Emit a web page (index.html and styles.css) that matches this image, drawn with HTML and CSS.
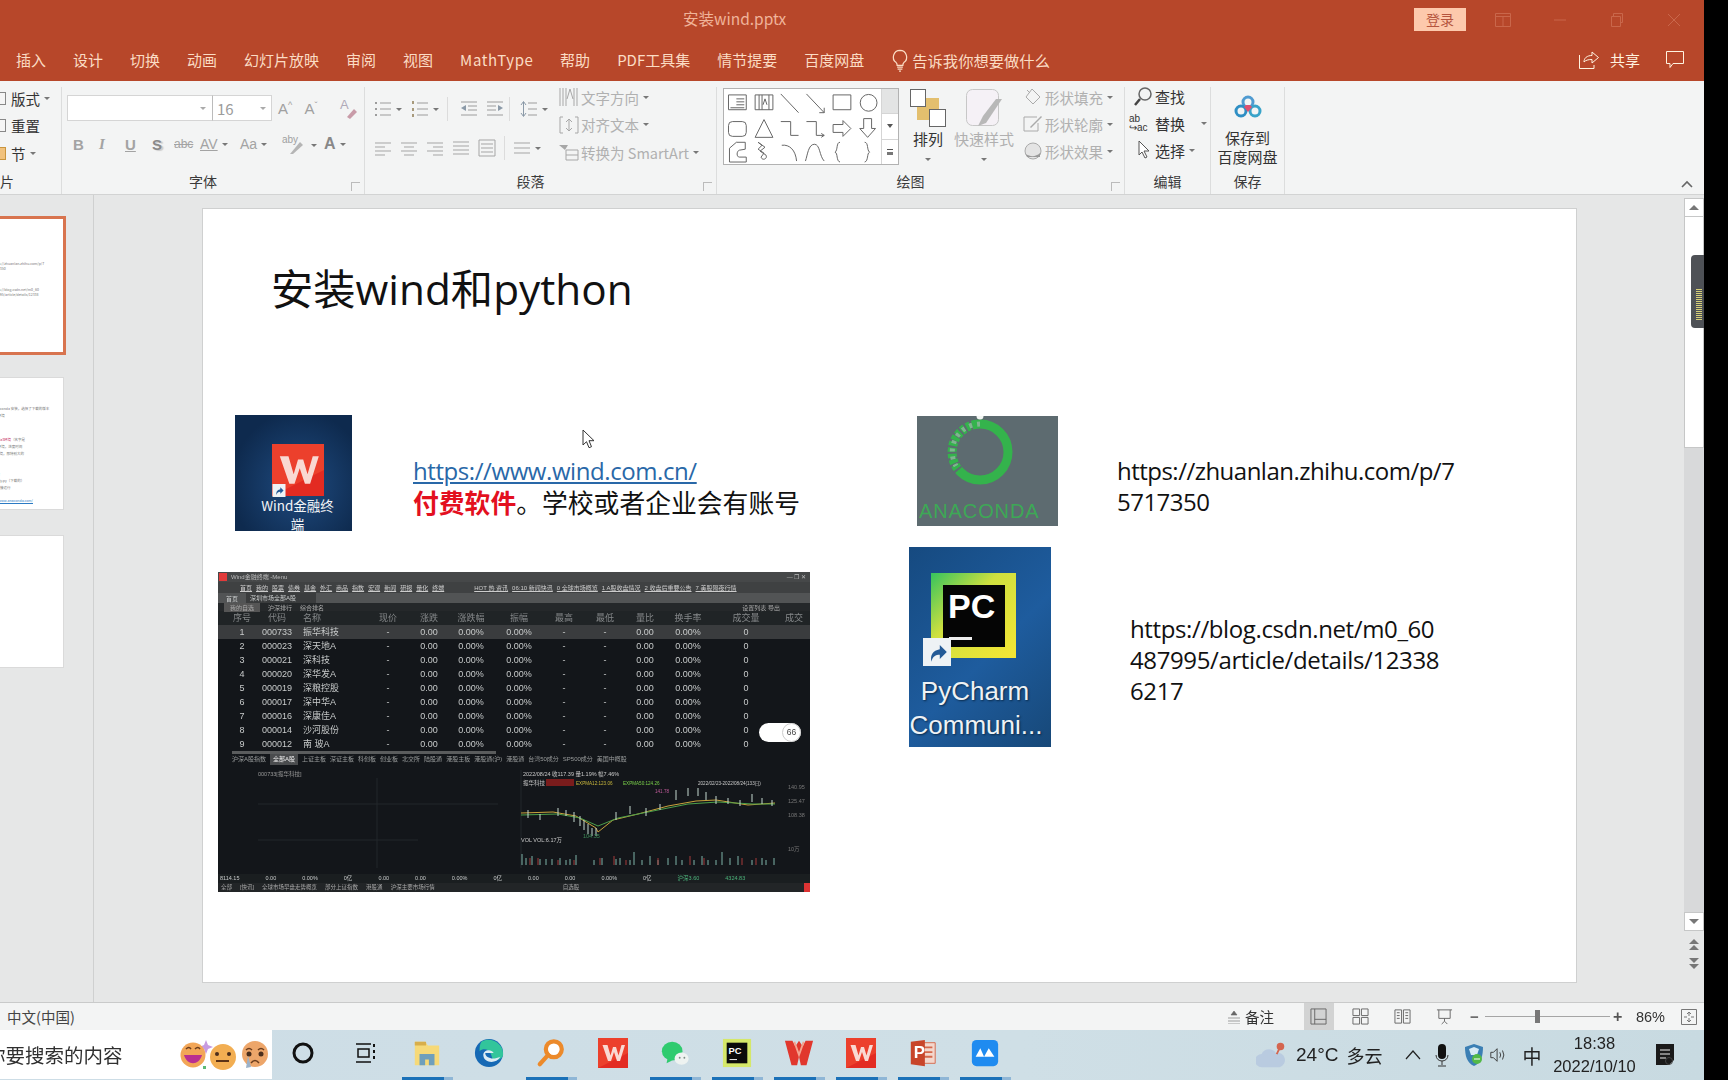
FILE: index.html
```html
<!DOCTYPE html>
<html lang="zh-CN">
<head>
<meta charset="utf-8">
<title>安装wind.pptx</title>
<link rel="stylesheet" href="styles.css">
</head>
<body>
<svg class="defs" width="0" height="0">
  <symbol id="ico-wind" viewBox="0 0 60 60"><rect width="60" height="60" fill="#e32b22"/><path d="M0 0h60v30L0 60z" fill="#f04a30" opacity=".7"/><path d="M9 14h10l6 21 5-17h6l5 17 6-21h7L44 46h-6l-6-18-6 18h-6z" fill="#f9d9d2"/></symbol>
  <symbol id="ico-shortcut" viewBox="0 0 20 20"><rect width="20" height="20" fill="#eef2f5"/><path d="M6 17c-1-5 1-8 6-9V5l5 5-5 5v-3c-3 0-5 1-6 5z" fill="#245a96"/></symbol>
</svg>
<div class="screen">
  <header class="titlebar">
    <div class="title-row">
      <div class="doc-title">安装wind.pptx</div>
      <div class="login">登录</div>
      <div class="win-btns">
        <svg class="win-ico" viewBox="0 0 16 14"><path d="M.5.5h15v13H.5zM.5 3.5h15M8 3.5v10" fill="none" stroke="currentColor"/></svg>
        <svg class="win-ico" viewBox="0 0 16 14"><path d="M2 7h12" fill="none" stroke="currentColor"/></svg>
        <svg class="win-ico" viewBox="0 0 16 14"><path d="M2.500 3.500h9v10h-9zM4.500 3V.5h9v9H12" fill="none" stroke="currentColor"/></svg>
        <svg class="win-ico" viewBox="0 0 16 14"><path d="M2 1l12 12M14 1L2 13" fill="none" stroke="currentColor"/></svg>
      </div>
    </div>
    <div class="tab-row">
      <nav class="tabs">
        <span>插入</span><span>设计</span><span>切换</span><span>动画</span><span>幻灯片放映</span><span>审阅</span><span>视图</span><span class="tab-math">MathType</span><span>帮助</span><span>PDF工具集</span><span>情节提要</span><span>百度网盘</span>
        <span class="tell">
          <svg class="bulb" viewBox="0 0 18 24"><path d="M9 1.500a7 7 0 0 0-4 12.700c.8.700 1 1.500 1 2.800h6c0-1.300.2-2.100 1-2.800A7 7 0 0 0 9 1.500zM6 19h6M6.500 21h5M8 23h2" fill="none" stroke="currentColor" stroke-width="1.300"/></svg>
          告诉我你想要做什么
        </span>
      </nav>
      <div class="share">
        <svg class="share-ico" viewBox="0 0 20 20"><path d="M.5 6v13.500H15V16M5 13c0-4 3-6.500 8-6.500V3l6.500 5.500L13 14v-3.500c-4 0-6.500.8-8 2.500z" fill="none" stroke="currentColor"/></svg>
        <span class="share-label">共享</span>
        <svg class="comment-ico" viewBox="0 0 18 18"><path d="M.5.5h17v12H7l-3 4v-4H.5z" fill="none" stroke="currentColor"/></svg>
      </div>
    </div>
  </header>

  <section class="ribbon">
    <div class="group g-slides">
      <div class="group-body rows">
        <div class="r-item"><i class="mini"></i>版式<b class="caret"></b></div>
        <div class="r-item"><i class="mini"></i>重置</div>
        <div class="r-item"><i class="mini orange"></i>节<b class="caret"></b></div>
      </div>
      <div class="group-label left">片</div>
    </div>

    <div class="group g-font">
      <div class="group-body font-body">
        <div class="font-row1">
          <div class="font-name"><b class="caret"></b></div>
          <div class="font-size">16<b class="caret"></b></div>
          <span class="fi big">A<sup>^</sup></span>
          <span class="fi big">A<sup>ˇ</sup></span>
          <svg class="fi-clear" viewBox="0 0 20 22"><text x="2" y="12" class="svg-a">A</text><path d="M9 20l7-8 3 3-7 7z" fill="#c89ba8"/></svg>
        </div>
        <div class="font-row2">
          <span class="fs serif-b">B</span>
          <span class="fs serif-i">I</span>
          <span class="fs under">U</span>
          <span class="fs shadow">S</span>
          <span class="fs strike">abc</span>
          <span class="fs av">AV<b class="caret"></b></span>
          <span class="fs aa">Aa<b class="caret"></b></span>
          <svg class="hl" viewBox="0 0 24 22"><text x="1" y="10" class="svg-aby">aby</text><path d="M9 21l10-12 3 3-10 9z" fill="#b5b5b5"/></svg>
          <span class="caret-after"><b class="caret"></b></span>
          <span class="fs acolor">A<b class="caret"></b></span>
        </div>
      </div>
      <div class="group-label shifted">字体<i class="launch"></i></div>
    </div>

    <div class="group g-para">
      <div class="group-body para-body">
        <div class="para-left">
          <div class="para-row1">
            <svg class="pi" viewBox="0 0 18 18"><path d="M6 3h11M6 9h11M6 15h11" stroke="#9c9c9c" fill="none"/><path d="M1 2h2v2H1zM1 8h2v2H1zM1 14h2v2H1z" fill="#9c9c9c"/></svg><b class="caret"></b>
            <svg class="pi p-num" viewBox="0 0 18 18"><path d="M6 3h11M6 9h11M6 15h11" stroke="#9c9c9c" fill="none"/><path d="M1 1h2v3H1zM1 8h2v3H1zM1 14h2v3H1z" fill="#a89a7c"/></svg><b class="caret"></b>
            <i class="vsep"></i>
            <svg class="pi p-out" viewBox="0 0 18 18"><path d="M1 2h16M8 6h9M8 10h9M1 15h16" stroke="#9c9c9c" fill="none"/><path d="M6 5v6L1 8z" fill="#8b9aa8"/></svg>
            <svg class="pi p-gap2" viewBox="0 0 18 18"><path d="M1 2h16M1 6h9M1 10h9M1 15h16" stroke="#9c9c9c" fill="none"/><path d="M12 5v6l5-3z" fill="#8b9aa8"/></svg>
            <i class="vsep"></i>
            <svg class="pi p-ls" viewBox="0 0 18 18"><path d="M8 3h9M8 9h9M8 15h9" stroke="#9c9c9c" fill="none"/><path d="M3.500 2v14M1 5l2.500-3.500L6 5M1 13l2.500 3.500L6 13" stroke="#8b9aa8" fill="none"/></svg><b class="caret"></b>
          </div>
          <div class="para-row2">
            <svg class="pi" viewBox="0 0 18 18"><path d="M1 4h16M1 8h10M1 12h16M1 16h10" stroke="#a5a5a5" fill="none"/></svg>
            <svg class="pi" viewBox="0 0 18 18"><path d="M1 4h16M4 8h10M1 12h16M4 16h10" stroke="#a5a5a5" fill="none"/></svg>
            <svg class="pi" viewBox="0 0 18 18"><path d="M1 4h16M7 8h10M1 12h16M7 16h10" stroke="#a5a5a5" fill="none"/></svg>
            <svg class="pi" viewBox="0 0 18 18"><path d="M1 3h16M1 7h16M1 11h16M1 15h16" stroke="#a5a5a5" fill="none"/></svg>
            <svg class="pi" viewBox="0 0 18 18"><path d="M1 1h16M1 17h16M3 5h12M3 9h12M3 13h12M1 1v16M17 1v16" stroke="#a5a5a5" fill="none"/></svg>
            <i class="vsep"></i>
            <svg class="pi" viewBox="0 0 18 18"><path d="M1 4h16M1 9h16M1 14h16" stroke="#a5a5a5" fill="none"/></svg><b class="caret"></b>
          </div>
        </div>
        <div class="para-right">
          <div class="r-item dim"><svg class="ri" viewBox="0 0 22 20"><path d="M2 1v18M5 1v18M8 1v18M16 1v18M19 1v18M12 2l-3 10M12 2l3 10" stroke="#a7a7a7" fill="none"/></svg>文字方向<b class="caret"></b></div>
          <div class="r-item dim"><svg class="ri" viewBox="0 0 22 20"><path d="M5 2H2v16h3M17 2h3v16h-3M11 4v12M8 7l3-3 3 3M8 13l3 3 3-3" stroke="#a7a7a7" fill="none"/></svg>对齐文本<b class="caret"></b></div>
          <div class="r-item dim"><svg class="ri" viewBox="0 0 22 20"><path d="M1 3h9l-3 5z" fill="#a7a7a7"/><path d="M8 8h12v10H8zM8 13h12" stroke="#a7a7a7" fill="none"/></svg>转换为 SmartArt<b class="caret"></b></div>
        </div>
      </div>
      <div class="group-label shifted">段落<i class="launch"></i></div>
    </div>

    <div class="group g-draw">
      <div class="group-body draw-body">
        <div class="gallery">
          <svg class="shapes" viewBox="0 0 158 76">
            <g fill="none" stroke="#666" stroke-width="1">
              <path d="M4 6h18v15H4zM12 10h8M12 13h8M12 16h8M6 19h14"/><path d="M31 6h18v15H31zM35 6v15M38 6v15M45 6v15M41 10l-2 6M41 10l2 6"/>
              <path d="M57 5l18 19"/><path d="M83 5l18 19M101 24v-5M101 24h-5"/><path d="M110 6h18v15h-18z"/><circle cx="146" cy="14" r="8.500"/>
              <rect x="4" y="33" width="18" height="15" rx="4"/><path d="M40 31l9 18H31z"/><path d="M57 33h10v14h8"/><path d="M83 33h10v14h8M101 47l-3-2M101 47l-3 2"/>
              <path d="M110 36h10v-4l8 8-8 8v-4h-10z"/><path d="M141 30h8v10h4l-8 9-8-9h4z"/>
              <path d="M5 74V60l7-6h9v7l-6 1c-3 1-3 7 0 7h7v5z"/><path d="M34 54l7 5-5 4 6 4c2 4-4 6-5 2l3-4-6-4 4-4z"/><path d="M58 57c8-1 14 5 15 16"/><path d="M82 73c2-6 3-17 9-17s5 12 10 17"/><path d="M117 54c-4 0-2 8-5 10 3 1 1 9 5 10"/><path d="M142 54c4 0 2 8 5 10-3 1-1 9-5 10"/>
            </g>
          </svg>
          <div class="gal-scroll">
            <span class="gs gs-up"></span>
            <span class="gs"><i class="tri"></i></span>
            <span class="gs gs-more"><i class="tri-line"></i></span>
          </div>
        </div>
        <div class="big-btn arrange-btn">
          <svg class="arrange" viewBox="0 0 36 38"><rect x="7" y="9" width="22" height="22" fill="#e3bf6e"/><rect x=".5" y=".5" width="15" height="17" fill="#fff" stroke="#666"/><rect x="19.500" y="20.500" width="16" height="17" fill="#fff" stroke="#666"/></svg>
          <span class="big-label">排列</span><b class="caret"></b>
        </div>
        <div class="big-btn quick">
          <svg class="qstyle" viewBox="0 0 36 38"><rect x=".5" y=".5" width="32" height="36" rx="6" fill="#f5f1f6" stroke="#c7c7c7"/><path d="M36 10L20 34l-8 3 5-10 13-17z" fill="#b8b8b8"/></svg>
          <span class="big-label">快速样式</span><b class="caret"></b>
        </div>
        <div class="shape-col">
          <div class="r-item dim"><svg class="ri2" viewBox="0 0 20 20"><path d="M9 2l8 8-7 7-7-7z" fill="none" stroke="#aaa"/><path d="M4 3l3 3" stroke="#aaa"/></svg>形状填充<b class="caret"></b></div>
          <div class="r-item dim"><svg class="ri2" viewBox="0 0 20 20"><path d="M14 3H1v14h14V9" fill="none" stroke="#aaa"/><path d="M7 13l11-11 1 1L8 14z" fill="#aaa"/></svg>形状轮廓<b class="caret"></b></div>
          <div class="r-item dim"><svg class="ri2" viewBox="0 0 20 20"><circle cx="10" cy="10" r="8" fill="#e4e4e4" stroke="#aaa"/><path d="M3 13c4 3 10 3 14-1v4H4z" fill="#999"/></svg>形状效果<b class="caret"></b></div>
        </div>
      </div>
      <div class="group-label shifted">绘图<i class="launch"></i></div>
    </div>

    <div class="group g-edit">
      <div class="group-body rows edit-rows">
        <div class="r-item strong"><svg class="ri3" viewBox="0 0 20 20"><circle cx="12" cy="8" r="6" fill="none" stroke="#666" stroke-width="1.500"/><path d="M7 13l-5 6" stroke="#444" stroke-width="2.500"/></svg>查找</div>
        <div class="r-item strong"><span class="abac">ab<br>↪ac</span>替换<b class="caret spaced"></b></div>
        <div class="r-item strong"><svg class="ri3 ptr" viewBox="0 0 20 20"><path d="M5 1v14l3-3 3 6 2-1-3-6h5z" fill="#fff" stroke="#555"/></svg>选择<b class="caret"></b></div>
      </div>
      <div class="group-label">编辑</div>
    </div>

    <div class="group g-save">
      <div class="group-body save-body">
        <svg class="baidu" viewBox="0 0 28 24"><circle cx="14" cy="7" r="5" fill="none" stroke="#4f9bd1" stroke-width="3"/><circle cx="7" cy="16" r="5" fill="none" stroke="#2f8fc4" stroke-width="3"/><circle cx="21" cy="16" r="5" fill="none" stroke="#39a3c9" stroke-width="3"/><path d="M14 17l-4-5 2-2h4l2 2z" fill="#e0506f"/></svg>
        <span class="save-text">保存到<br>百度网盘</span>
      </div>
      <div class="group-label">保存</div>
    </div>

    <svg class="collapse" viewBox="0 0 12 8"><path d="M1 7l5-5 5 5" fill="none" stroke="#666" stroke-width="1.600"/></svg>
  </section>

  <main class="editor">
    <aside class="thumbs">
      <div class="thumb active">
        <p class="tt t1a">https://zhuanlan.zhihu.com/p/7<br>5717350</p>
        <p class="tt t1b">https://blog.csdn.net/m0_60<br>487995/article/details/12338</p>
      </div>
      <div class="thumb second">
        <p class="tt t2a">通过 anaconda 安装，选择了下载的版本<br>python环境</p>
        <p class="tt t2b"><em>anaconda3环境</em>（名字是<br>python环境，进度时间<br>conda环境，即特别大的<br>可选</p>
        <p class="tt t2c">环境变量<br>anacondy.py（下载的）<br>命令行直接运行</p>
        <p class="tt t2d">https://www.anaconda.com/</p>
      </div>
      <div class="thumb third"></div>
    </aside>

    <div class="work">
      <article class="slide">
        <h1 class="slide-title">安装wind和python</h1>

        <div class="pic pic-wind">
          <svg class="w-logo"><use href="#ico-wind"/></svg>
          <svg class="w-short"><use href="#ico-shortcut"/></svg>
          <div class="w-label">Wind金融终<br>端</div>
        </div>

        <div class="stext link-block">
          <a class="link">https://www.wind.com.cn/</a><br>
          <strong class="paid">付费软件</strong>。学校或者企业会有账号
        </div>

        <div class="pic pic-ana">
          <svg class="ana-ring" viewBox="0 0 76 76">
            <circle cx="38" cy="38" r="28" fill="none" stroke="#34b34c" stroke-width="9"/>
            <path d="M30 11A28 28 0 0 0 18 58" fill="none" stroke="#5d6b70" stroke-width="10" stroke-dasharray="2 4"/>
            <path d="M38 10A28 28 0 0 0 14 52" fill="none" stroke="#7fb58f" stroke-width="5" stroke-dasharray="3 5"/>
            <circle cx="38" cy="2" r="3.500" fill="#f3f6f4"/>
          </svg>
          <div class="ana-label">ANACONDA</div>
        </div>
        <div class="stext url-a">https://zhuanlan.zhihu.com/p/7<br>5717350</div>

        <div class="pic pic-py">
          <div class="py-logo"><div class="py-inner"><span class="py-pc">PC</span><i class="py-bar"></i></div></div>
          <svg class="py-short"><use href="#ico-shortcut"/></svg>
          <div class="py-label">PyCharm<br><span class="py-cut">Communi...</span></div>
        </div>
        <div class="stext url-b">https://blog.csdn.net/m0_60<br>487995/article/details/12338<br>6217</div>

        <div class="wind-shot">
          <div class="ws-title"><i class="ws-logo"></i><span>Wind金融终端 -Menu</span><span class="ws-controls">— ❐ ✕</span></div>
          <div class="ws-menu"><span>首页</span><span>我的</span><span>股票</span><span>债券</span><span>基金</span><span>外汇</span><span>商品</span><span>指数</span><span>宏观</span><span>新闻</span><span>研报</span><span>量化</span><span>终端</span><span class="ws-hot">HOT 热 资讯</span><span class="ws-hot2">06:10 新闻快讯</span><span>0 全球市场概览</span><span>1 A股收盘情况</span><span>2 收盘后重要公告</span><span>7 美股隔夜行情</span></div>
          <div class="ws-tabs"><span class="ws-tab1">首页</span><span class="ws-tab2">深圳市场全部A股</span></div>
          <div class="ws-tools"><span class="ws-tool-on">我的自选</span><span>沪深排行</span><span>综合排名</span><span class="ws-right">设置列表 导出</span></div>
          <div class="ws-grid ws-head"><span>序号</span><span>代码</span><span class="l">名称</span><span>现价</span><span>涨跌</span><span>涨跌幅</span><span>振幅</span><span>最高</span><span>最低</span><span>量比</span><span>换手率</span><span>成交量</span><span>成交</span></div>
          <div class="ws-grid on"><span>1</span><span>000733</span><span class="l">振华科技</span><span>-</span><span>0.00</span><span>0.00%</span><span>0.00%</span><span>-</span><span>-</span><span>0.00</span><span>0.00%</span><span>0</span><span></span></div>
          <div class="ws-grid"><span>2</span><span>000023</span><span class="l">深天地A</span><span>-</span><span>0.00</span><span>0.00%</span><span>0.00%</span><span>-</span><span>-</span><span>0.00</span><span>0.00%</span><span>0</span><span></span></div>
          <div class="ws-grid"><span>3</span><span>000021</span><span class="l">深科技</span><span>-</span><span>0.00</span><span>0.00%</span><span>0.00%</span><span>-</span><span>-</span><span>0.00</span><span>0.00%</span><span>0</span><span></span></div>
          <div class="ws-grid"><span>4</span><span>000020</span><span class="l">深华发A</span><span>-</span><span>0.00</span><span>0.00%</span><span>0.00%</span><span>-</span><span>-</span><span>0.00</span><span>0.00%</span><span>0</span><span></span></div>
          <div class="ws-grid"><span>5</span><span>000019</span><span class="l">深粮控股</span><span>-</span><span>0.00</span><span>0.00%</span><span>0.00%</span><span>-</span><span>-</span><span>0.00</span><span>0.00%</span><span>0</span><span></span></div>
          <div class="ws-grid"><span>6</span><span>000017</span><span class="l">深中华A</span><span>-</span><span>0.00</span><span>0.00%</span><span>0.00%</span><span>-</span><span>-</span><span>0.00</span><span>0.00%</span><span>0</span><span></span></div>
          <div class="ws-grid"><span>7</span><span>000016</span><span class="l">深康佳A</span><span>-</span><span>0.00</span><span>0.00%</span><span>0.00%</span><span>-</span><span>-</span><span>0.00</span><span>0.00%</span><span>0</span><span></span></div>
          <div class="ws-grid"><span>8</span><span>000014</span><span class="l">沙河股份</span><span>-</span><span>0.00</span><span>0.00%</span><span>0.00%</span><span>-</span><span>-</span><span>0.00</span><span>0.00%</span><span>0</span><span></span></div>
          <div class="ws-grid"><span>9</span><span>000012</span><span class="l">南 玻A</span><span>-</span><span>0.00</span><span>0.00%</span><span>0.00%</span><span>-</span><span>-</span><span>0.00</span><span>0.00%</span><span>0</span><span></span></div>
          <div class="ws-scroll"><i></i></div>
          <div class="ws-sheet"><span>沪深A股指数</span><span class="on">全部A股</span><span>上证主板</span><span>深证主板</span><span>科创板</span><span>创业板</span><span>北交所</span><span>陆股通</span><span>港股主板</span><span>港股通(沪)</span><span>港股通</span><span>台湾50成分</span><span>SP500成分</span><span>美国中概股</span></div>
          <svg class="ws-chart" viewBox="0 0 592 104">
            <g stroke="#23272a" fill="none"><path d="M40 36H280M40 72H200M159 10V100"/><path d="M303 2V100"/></g>
            <text x="40" y="8" class="ws-t" fill="#9a9a9a">000733[振华科技]</text>
            <text x="305" y="8" class="ws-t" fill="#c9c9c9">2022/08/24 收117.39  量1.19%  幅7.46%</text>
            <text x="305" y="17" class="ws-t" fill="#c9c9c9">振华科技</text>
            <rect x="328" y="11" width="28" height="7" fill="#7a1c1c"/>
            <text x="358" y="17" class="ws-t5" fill="#c9b73c">EXPMA12:123.06</text>
            <text x="405" y="17" class="ws-t5" fill="#7ad04a">EXPMA50:124.26</text>
            <text x="480" y="17" class="ws-t5" fill="#c9c9c9">2022/02/23-2022/08/24(133日)</text>
            <path d="M303 45L335 44 358 48 378 60 380 64 395 52 420 46 450 38 478 33 498 32 530 37 557 35" fill="none" stroke="#c9a23c"/>
            <path d="M303 47L340 46 362 50 380 58 400 50 430 44 470 36 500 34 535 36 557 36" fill="none" stroke="#4c9f4a"/>
            <path d="M310 42v8M322 46v6M340 40v8M348 42v6M356 44v10M362 48v10M366 52v10M370 56v10M374 60v8M378 60v8M398 44v8M412 38v8M428 40v8M442 36v6M458 22v10M470 20v8M480 20v8M488 24v8M498 28v8M510 30v6M522 32v6M534 26v8M544 30v6M554 32v6" stroke="#c5d8cf" fill="none"/>
            <text x="437" y="25" class="ws-t5" fill="#c05a9a">141.78</text>
            <text x="365" y="70" class="ws-t" fill="#3e8e58">104.35</text>
            <text x="303" y="74" class="ws-t" fill="#c9c9c9">VOL  VOL:6.17万</text>
            <text x="570" y="21" class="ws-t" fill="#777">140.95</text>
            <text x="570" y="35" class="ws-t" fill="#777">125.47</text>
            <text x="570" y="49" class="ws-t" fill="#777">108.38</text>
            <text x="570" y="83" class="ws-t" fill="#777">10万</text>
            <path d="M304 97V86M308 97V90M314 97V88M322 97V91M328 97V91M334 97V91M342 97V90M348 97V92M352 97V91M358 97V87M376 97V92M384 97V90M398 97V91M402 97V90M412 97V92M416 97V84M424 97V92M432 97V88M440 97V92M450 97V90M458 97V88M464 97V92M476 97V92M484 97V88M490 97V92M498 97V92M504 97V84M512 97V90M520 97V88M534 97V92M544 97V90M548 97V92M556 97V90" stroke="#7fb3a8" fill="none"/>
            <path d="M312 97V90M320 97V90M340 97V92M356 97V92M382 97V90M396 97V88M408 97V92M440 97V90M472 97V88M486 97V90M524 97V90M538 97V90" stroke="#a63a3a" fill="none"/>
          </svg>
          <div class="ws-info"><span>8114.15</span><span>0.00</span><span>0.00%</span><span>0亿</span><span>0.00</span><span>0.00</span><span>0.00%</span><span>0亿</span><span>0.00</span><span>0.00</span><span>0.00%</span><span>0亿</span><span class="ws-green">沪深3.60</span><span class="ws-green">4324.83</span></div>
          <div class="ws-foot"><span>全部</span><span>[快讯]</span><span>全球市场早盘走势概览</span><span>部分上证指数</span><span>港股通</span><span>沪深主要市场行情</span><span class="ws-last">自选股</span><i></i></div>
          <div class="ws-float"><span class="ws-pct">66</span></div>
        </div>

        <svg class="cursor" viewBox="0 0 14 20"><path d="M1 1v15l3.500-3.300 2.500 6 2.500-1-2.500-6H12z" fill="#fff" stroke="#333"/></svg>
      </article>
    </div>

    <div class="vscroll">
      <div class="sb-btn"><i class="sb-up"></i></div>
      <div class="sb-thumb"></div>
      <div class="sb-track"></div>
      <div class="sb-btn sb-down"><i class="sb-dn"></i></div>
      <div class="sb-page"><i class="sb-up2"></i><i class="sb-up2"></i></div>
      <div class="sb-page sb-page2"><i class="sb-dn2"></i><i class="sb-dn2"></i></div>
      <div class="float-widget"><i></i></div>
    </div>
  </main>

  <footer class="statusbar">
    <span class="lang">中文(中国)</span>
    <div class="st-right">
      <span class="notes"><svg class="st-i" viewBox="0 0 14 14"><path d="M1 8h12M1 11h12M1 14h12M4 5l3-4 3 4z" fill="#666" stroke="#666" stroke-width=".6"/></svg>备注</span>
      <span class="view on"><svg class="st-v" viewBox="0 0 18 18"><path d="M1 1h16v16H1zM5 1v16M5 12h12" fill="none" stroke="#666"/></svg></span>
      <span class="view"><svg class="st-v" viewBox="0 0 18 18"><path d="M1 1h7v7H1zM10 1h7v7h-7zM1 10h7v7H1zM10 10h7v7h-7z" fill="none" stroke="#666"/></svg></span>
      <span class="view"><svg class="st-v" viewBox="0 0 18 18"><path d="M1 2h7v14H1zM10 2h7v14h-7zM3 5h3M3 8h3M3 11h3M12 5h3M12 8h3M12 11h3" fill="none" stroke="#666"/></svg></span>
      <span class="view"><svg class="st-v" viewBox="0 0 18 18"><path d="M1 2h16M3 2v9h12V2M9 11v3M6 17l3-3 3 3" fill="none" stroke="#666"/></svg></span>
      <span class="zoom-minus">−</span>
      <span class="zoom-track"><i class="zoom-thumb"></i></span>
      <span class="zoom-plus">+</span>
      <span class="zoom-val">86%</span>
      <svg class="st-fit" viewBox="0 0 16 16"><path d="M.5.5h15v15H.5zM8 3v4M6 5l2-2 2 2M8 13V9M6 11l2 2 2-2M3 8h3M13 8h-3" fill="none" stroke="#777"/></svg>
    </div>
  </footer>

  <footer class="taskbar">
    <div class="search">
      <span class="search-text">你要搜索的内容</span>
      <svg class="emoji" viewBox="0 0 90 30">
        <path d="M26 0l2 5 5 2-5 2-2 5-2-5-5-2 5-2z" fill="#c79be0"/><rect x="23" y="26" width="3" height="3" fill="#5dbb74"/>
        <circle cx="13" cy="15" r="12.500" fill="#f2a657"/><path d="M4 15c3 11 15 11 18 0z" fill="#b92f91"/><path d="M6 9q3-3 5 0M15 9q3-3 5 0" stroke="#6b3d1d" fill="none" stroke-width="1.500"/>
        <circle cx="75" cy="14" r="13" fill="#eda66a"/><path d="M66 10q3-3 6 0M78 10q3-3 6 0" stroke="#6b3d1d" fill="none" stroke-width="1.500"/><circle cx="69" cy="14" r="2.500" fill="#4b2e1c"/><circle cx="81" cy="14" r="2.500" fill="#4b2e1c"/><path d="M71 23q4-5 8 0" stroke="#6b3d1d" fill="none" stroke-width="1.500"/><path d="M68 16l-2 12 5-1z" fill="#9cb2c9"/>
        <circle cx="43" cy="17" r="13" fill="#f2ae52"/><circle cx="37" cy="14" r="2" fill="#4b2e1c"/><circle cx="49" cy="14" r="2" fill="#4b2e1c"/><path d="M36 21h13" stroke="#5b3216" stroke-width="2"/>
      </svg>
    </div>
    <div class="apps">
      <span class="app"><svg class="ti" viewBox="0 0 24 24"><circle cx="12" cy="12" r="9" fill="none" stroke="#111" stroke-width="3"/></svg></span>
      <span class="app"><svg class="ti" viewBox="0 0 24 24"><path d="M3 3h15M3 21h15M5 8h11v8H5z" fill="none" stroke="#111" stroke-width="1.500"/><path d="M20 3h2v3h-2zM20 9h2v3h-2zM20 15h2v3h-2z" fill="#111"/></svg></span>
      <span class="app run"><svg class="ta" viewBox="0 0 32 32"><path d="M3 4h11l3 4h12v21H3z" fill="#f6d978"/><path d="M3 4h12v4H3z" fill="#d8ae4b"/><path d="M8 29V17h16v12h-6v-6h-4v6z" fill="#6f9fbc"/></svg></span>
      <span class="app"><svg class="ta" viewBox="0 0 32 32"><circle cx="16" cy="16" r="15" fill="#1669b5"/><path d="M8 4c10-6 24 2 23 14-1 5-7 6-11 5l-2-6c-2-6-9-6-12-3 0-4 0-7 2-10z" fill="#32c59b"/><path d="M10 19c-1-6 8-8 11-3H12c0 5 8 8 16 4-4 8-17 7-18-1z" fill="#dcebf4"/></svg></span>
      <span class="app run"><svg class="ta" viewBox="0 0 32 32"><circle cx="19" cy="12" r="8.500" fill="#fff" stroke="#ec8a2b" stroke-width="4.500"/><path d="M13 18L4 28" stroke="#ec8a2b" stroke-width="4.500" stroke-linecap="round"/></svg></span>
      <span class="app"><svg class="ta"><use href="#ico-wind"/></svg></span>
      <span class="app run"><svg class="ta" viewBox="0 0 32 32"><ellipse cx="13" cy="14" rx="11" ry="10" fill="#2fcb6f"/><path d="M8 22l-1 5 6-3z" fill="#2fcb6f"/><ellipse cx="23" cy="22" rx="7.500" ry="6.500" fill="#eef3f1"/><circle cx="21" cy="21" r="1" fill="#7d8b85"/><circle cx="26" cy="21" r="1" fill="#7d8b85"/></svg></span>
      <span class="app run"><svg class="ta" viewBox="0 0 32 32"><path d="M1 1h30v30H1z" fill="#d5e86a"/><rect x="5" y="5" width="22" height="22" fill="#0b0b0b"/><text x="7" y="17" class="svg-pc">PC</text><path d="M8 23h8" stroke="#fff"/></svg></span>
      <span class="app run"><svg class="ta" viewBox="0 0 32 32"><path d="M1 3h8l3 6 4-6 4 6 3-6h8l-7 26h-6l-2-9-2 9H8z" fill="#e1372d"/><path d="M11 4l5 14 5-14" fill="none" stroke="#f4a38f" stroke-width="2"/></svg></span>
      <span class="app run"><svg class="ta"><use href="#ico-wind"/></svg></span>
      <span class="app run"><svg class="ta" viewBox="0 0 32 32"><path d="M11 5h18v22H11z" fill="#f3d7cd" stroke="#d5694c"/><path d="M17 10h9M17 15h9M17 20h9" stroke="#d5694c" stroke-width="2"/><path d="M3 4l15-2v28L3 28z" fill="#c8452a"/><text x="6" y="21" class="svg-p">P</text></svg></span>
      <span class="app run"><svg class="ta" viewBox="0 0 32 32"><rect x="2" y="2" width="28" height="28" rx="5" fill="#1f8bf0"/><path d="M6 20l5-9 4 9zM15 20l5-9 6 9z" fill="#fff"/></svg></span>
    </div>
    <div class="tray">
      <svg class="t-cloud" viewBox="0 0 34 30"><path d="M6 28a7 7 0 0 1 0-14c2-6 12-7 15-1a7 7 0 0 1 4 15z" fill="#b9cbe0"/><circle cx="26" cy="6" r="4" fill="#d4654f"/><path d="M25 8l-3 6" stroke="#d4654f" stroke-width="2"/></svg>
      <span class="t-temp">24°C</span>
      <span class="t-wx">多云</span>
      <svg class="t-up" viewBox="0 0 16 10"><path d="M1 9l7-8 7 8" fill="none" stroke="#222" stroke-width="1.200"/></svg>
      <svg class="t-mic" viewBox="0 0 14 24"><rect x="3" y="1" width="8" height="15" rx="4" fill="#111"/><path d="M1 12c0 8 12 8 12 0M7 18v4M3 23h8" fill="none" stroke="#333"/></svg>
      <svg class="t-shield" viewBox="0 0 20 24"><path d="M10 1l9 3c0 9-2 16-9 19C3 20 1 13 1 4z" fill="#3b7fb4"/><path d="M5 6l5-2 5 2-2 6H7z" fill="#d7eaf4"/><circle cx="13" cy="16" r="5" fill="#52b946"/><path d="M10 16h6" stroke="#fff"/></svg>
      <svg class="t-vol" viewBox="0 0 20 18"><path d="M2 6h3l4-4v14l-4-4H2zM12 6q2 3 0 6M15 4q3 5 0 10" fill="none" stroke="#333"/></svg>
      <span class="t-ime">中</span>
      <span class="t-clock"><span>18:38</span><span>2022/10/10</span></span>
      <svg class="t-note" viewBox="0 0 20 24"><path d="M1 1h18v16l-5 5H1z" fill="#1a1a1a"/><path d="M5 7h10M5 11h10M5 15h6" stroke="#eee"/><circle cx="14" cy="18" r="3.500" fill="none" stroke="#444"/></svg>
    </div>
  </footer>
</div>
</body>
</html>
```

FILE: styles.css
```css
* { box-sizing: border-box; }
html, body { margin: 0; height: 100%; }
body {
  background: #000;
  width: 1728px;
  height: 1080px;
  overflow: hidden;
  font-family: "Noto Sans CJK SC", "Noto Sans", sans-serif;
  color: #333;
}
.defs { position: absolute; }
.screen { width: 1704px; height: 1080px; display: flex; flex-direction: column; overflow: hidden; filter: blur(.4px); }

/* title bar */
.titlebar { height: 81px; background: #b7472a; color: #fbdcc4; flex: none; }
.title-row { height: 37px; display: flex; align-items: center; position: relative; }
.doc-title { position: absolute; left: 683px; top: 7px; font-size: 15.500px; line-height: 22px; color: #f0b49a; }
.login { margin-left: 1414px; width: 52px; height: 23px; margin-top: 2px; background: #fdc9ac; color: #b5553e; font-size: 14px; line-height: 23px; text-align: center; }
.win-btns { display: flex; margin-left: 29px; gap: 41px; color: #c9674b; margin-top: 2px; }
.win-ico { width: 16px; height: 14px; }
.tab-row { height: 44px; display: flex; align-items: center; padding: 2px 20px 0 16px; }
.tabs { display: flex; gap: 27px; font-size: 15px; line-height: 22px; white-space: nowrap; }
.tab-math { width: 73px; letter-spacing: .6px; }
.tell { display: flex; align-items: center; gap: 3px; font-size: 15.300px; }
.bulb { width: 18px; height: 23px; }
.share { margin-left: auto; display: flex; align-items: center; color: #fff3e0; font-size: 15px; margin-top: -2px; }
.share-ico { width: 20px; height: 20px; margin-right: 3px; }
.share-label { margin-left: 8px; }
.comment-ico { width: 18px; height: 18px; margin-left: 26px; margin-top: 2px; }

/* ribbon */
.ribbon { height: 114px; flex: none; display: flex; background: #f3f4f4; border-bottom: 1px solid #d2d3d3; position: relative; font-size: 15px; }
.group { display: flex; flex-direction: column; border-right: 1px solid #dcdddd; margin-top: 6px; flex: none; }
.group-body { height: 87px; flex: none; }
.group-label { position: relative; flex: 1; text-align: center; font-size: 14px; line-height: 21px; color: #3a3a3a; margin-top: -3px; }
.group-label.left { text-align: left; }
.group-label.shifted { padding-right: 20px; }
.launch { position: absolute; right: 4px; bottom: 3px; width: 9px; height: 9px; border: 1px solid #bbb; border-right: 0; border-bottom: 0; }
.g-slides { width: 62px; }
.g-font { width: 303px; }
.g-para { width: 352px; }
.g-draw { width: 408px; }
.g-edit { width: 86px; }
.g-save { width: 74px; }
.rows { display: flex; flex-direction: column; gap: 3.500px; margin: -1px 0 1px; }
.r-item { display: flex; align-items: center; height: 24px; white-space: nowrap; font-size: 14.500px; }
.mini { display: block; width: 6px; height: 13px; margin: 0 5px 0 0; border: 1px solid #888; border-left: 0; background: #f5f5f5; }
.mini.orange { background: #f1c27d; border-color: #c9953f; }
.caret { display: inline-block; width: 0; height: 0; margin-left: 4px; border: 3px solid transparent; border-top: 3.500px solid #777; border-bottom: 0; flex: none; vertical-align: middle; }
.caret.spaced { margin-left: 16px; }

.font-body { padding: 8px 0 0 5px; }
.font-row1 { display: flex; align-items: center; height: 26px; }
.font-name { width: 146px; height: 26px; background: #fff; border: 1px solid #d5d5d5; border-right: 1px solid #bbb; display: flex; align-items: center; justify-content: flex-end; padding-right: 6px; }
.font-name .caret { border-top-color: #aaa; }
.font-size { width: 59px; height: 26px; background: #fff; border: 1px solid #d5d5d5; border-left: 0; display: flex; align-items: center; justify-content: space-between; padding: 0 5px 0 4px; color: #9c9c9c; font-size: 15px; }
.font-size .caret { border-top-color: #aaa; }
.fi { color: #a0a0a0; font-size: 15px; width: 26px; text-align: center; }
.fi.big { font-family: "Liberation Sans", sans-serif; }
.fi sup { font-size: 9px; line-height: 0; }
.fi-clear { width: 20px; height: 22px; margin-left: 14px; }
.svg-a { font: 13px "Liberation Sans", sans-serif; fill: #b0a9b8; }
.font-row2 { display: flex; align-items: center; height: 26px; margin-top: 10px; color: #a3a3a3; font-family: "Liberation Sans", sans-serif; font-size: 15px; padding-left: 6px; white-space: nowrap; }
.fs { display: inline-flex; align-items: center; }
.serif-b { width: 26px; font-weight: 700; }
.serif-i { width: 26px; font-style: italic; font-family: "Liberation Serif", serif; font-weight: 700; }
.under { width: 27px; text-decoration: underline; font-weight: 700; }
.shadow { width: 22px; font-weight: 700; color: #8a8a8a; text-shadow: 2px 1px 1px #ccc; }
.strike { width: 26px; font-size: 12px; text-decoration: line-through; }
.av { width: 40px; font-size: 14px; text-decoration: underline; }
.aa { width: 38px; font-size: 14px; }
.hl { width: 24px; height: 22px; margin-left: 3px; }
.svg-aby { font: 10px "Liberation Sans", sans-serif; fill: #a0a0a0; }
.caret-after { width: 19px; padding-left: 2px; }
.acolor { font-size: 16px; font-weight: 700; color: #888; }

.para-body { display: flex; }
.para-left { width: 185px; padding: 10px 0 0 9px; flex: none; }
.para-row1, .para-row2 { display: flex; align-items: center; height: 24px; }
.para-row2 { margin-top: 15px; gap: 8px; }
.pi { width: 18px; height: 18px; flex: none; }
.para-row1 .caret { margin: 0 3px 0 4px; }
.p-num { margin-left: 6px; }
.p-out { margin-left: 6px; }
.p-gap2 { margin-left: 8px; }
.p-ls { margin-left: 4px; }
.vsep { display: block; width: 1px; height: 24px; background: #dcdcdc; margin: 0 6px 0 5px; flex: none; }
.para-row2 .vsep { margin: 0; }
.para-row2 .caret { margin-left: -4px; }
.para-right { display: flex; flex-direction: column; gap: 3.500px; margin: -2px 0 0 8px; }
.dim { color: #b0b0b0; }
.ri { width: 22px; height: 20px; margin-right: 1px; flex: none; }

.draw-body { display: flex; }
.gallery { width: 176px; height: 77px; margin: 1px 0 0 6px; display: flex; border: 1px solid #b2b2b2; background: #fff; flex: none; }
.shapes { width: 157px; height: 75px; flex: none; }
.gal-scroll { flex: 1; display: flex; flex-direction: column; border-left: 1px solid #d5d5d5; }
.gs { flex: 1; display: flex; align-items: center; justify-content: center; border-bottom: 1px solid #d5d5d5; }
.gs-up { background: #e3e4e4; }
.gs-more { border-bottom: 0; }
.tri { width: 0; height: 0; border: 3px solid transparent; border-top: 4px solid #555; border-bottom: 0; }
.tri-line { width: 6px; height: 6px; border-top: 1px solid #555; border-bottom: 3px solid #777; }
.big-btn { display: flex; flex-direction: column; align-items: center; margin-top: 2px; flex: none; }
.big-btn .big-label { font-size: 15px; line-height: 20px; margin-top: 2px; color: #333; }
.big-btn .caret { margin: 9px 0 0; }
.arrange-btn { width: 50px; margin-left: 4px; }
.arrange { width: 36px; height: 38px; }
.quick { width: 64px; margin-left: -1px; }
.quick .big-label { color: #b0b0b0; white-space: nowrap; }
.qstyle { width: 36px; height: 38px; }
.shape-col { display: flex; flex-direction: column; gap: 3px; margin: -2px 0 0 7px; }
.ri2 { width: 20px; height: 20px; margin-right: 2px; flex: none; }

.edit-rows { padding-left: 4px; gap: 3px; margin: -3px 0 3px; }
.strong { color: #333; font-size: 15px; }
.ri3 { width: 20px; height: 20px; margin: 0 2px 0 4px; flex: none; }
.ptr { margin-left: 5px; margin-right: 1px; }
.abac { font: 10px/9px "Liberation Sans", sans-serif; width: 22px; margin-right: 4px; flex: none; }
.save-body { display: flex; flex-direction: column; align-items: center; padding-top: 8px; }
.baidu { width: 28px; height: 24px; margin-bottom: 9px; }
.save-text { font-size: 15px; line-height: 19px; text-align: center; white-space: nowrap; }
.collapse { position: absolute; left: 1681px; top: 99px; width: 12px; height: 8px; }

/* editor */
.editor { flex: 1; display: flex; background: #e6e7e7; position: relative; min-height: 0; }
.thumbs { width: 94px; flex: none; border-right: 1px solid #cfd0d0; padding-top: 21px; display: flex; flex-direction: column; }
.thumb { background: #fff; width: 64px; height: 133px; border: 1px solid #dadada; border-left: 0; overflow: hidden; padding-top: 1px; margin-top: 22px; }
.thumb.active { width: 66px; height: 139px; border: 3px solid #d8744f; border-left: 0; margin-top: 0; }
.thumb.third { height: 133px; margin-top: 25px; }
.tt { margin: 0 0 0 -8px; font-size: 3.500px; line-height: 5px; color: #777; white-space: nowrap; }
.t1a { margin-top: 41px; }
.t1b { margin-top: 16px; }
.t2a { margin-top: 26px; line-height: 7px; margin-left: -14px; }
.t2b { margin-top: 17px; line-height: 7px; margin-left: -14px; }
.t2b em { color: #c4265a; font-style: normal; }
.t2c { margin-top: 6px; line-height: 7px; margin-left: -14px; }
.t2d { margin-top: 7px; color: #2b7ac4; text-decoration: underline; margin-left: -14px; }

.work { flex: 1; min-width: 0; padding: 14px 0 0 109px; }
.slide { position: relative; width: 1373px; height: 773px; background: #fff; box-shadow: 0 0 0 1px #cfd0d0; overflow: hidden; color: #111; }
.slide-title { position: absolute; left: 68px; top: 47px; margin: 0; font-weight: 400; font-size: 42.300px; line-height: 66px; white-space: nowrap; font-family: "Open Sans", "Noto Sans CJK SC", sans-serif; color: #111; }
.stext { position: absolute; font-family: "Open Sans", "Noto Sans CJK SC", sans-serif; font-size: 24px; line-height: 31px; white-space: nowrap; color: #111; }
.link-block { left: 210px; top: 246px; font-size: 25.800px; line-height: 30.500px; }
.link { color: #2968a8; text-decoration: underline; font-size: 24px; letter-spacing: -.42px; }
.paid { color: #e3101f; font-weight: 700; font-family: "Noto Sans CJK SC", sans-serif; }
.url-a { left: 914px; top: 246px; letter-spacing: -.52px; }
.url-b { left: 927px; top: 404px; letter-spacing: -.38px; }

.pic { position: absolute; overflow: hidden; }
.pic-wind { left: 32px; top: 206px; width: 117px; height: 116px; background: radial-gradient(ellipse at 55% 60%, #1f4b80, #0e2a4e 75%); color: #f2f4f6; text-align: center; }
.w-logo { position: absolute; left: 37px; top: 29px; width: 52px; height: 52px; }
.w-short { position: absolute; left: 37px; top: 69px; width: 14px; height: 13px; }
.w-label { position: absolute; left: 0; right: 0; top: 81px; padding-left: 8px; font-size: 13.500px; line-height: 19px; }
.pic-ana { left: 714px; top: 207px; width: 141px; height: 110px; background: #5d6b70; }
.ana-ring { position: absolute; left: 25px; top: -2px; width: 76px; height: 76px; }
.ana-label { position: absolute; left: 2px; top: 83px; font-family: "Liberation Sans", sans-serif; font-size: 20px; line-height: 24px; letter-spacing: .9px; color: #3da856; }
.pic-py { left: 706px; top: 338px; width: 142px; height: 200px; background: linear-gradient(135deg, #164a80, #1e5c9e 55%, #174878); color: #eef2f5; }
.py-logo { position: absolute; left: 22px; top: 26px; width: 85px; height: 85px; background: linear-gradient(135deg, #35c35e, #cfe03f 40%, #f6e634); padding: 12px; }
.py-inner { position: relative; width: 62px; height: 62px; background: #050505; }
.py-pc { position: absolute; left: 5px; top: 0; font: 700 34px/42px "Liberation Sans", sans-serif; color: #fff; }
.py-bar { position: absolute; left: 6px; top: 52px; width: 23px; height: 3px; background: #eee; }
.py-short { position: absolute; left: 14px; top: 91px; width: 28px; height: 28px; }
.py-label { position: absolute; left: -10px; right: 0; top: 127px; text-align: center; font: 26px/34px "Liberation Sans", "Open Sans", sans-serif; white-space: nowrap; text-shadow: 1px 1px 2px #0a2a4a; }
.py-cut { display: inline-block; margin-left: 2px; }

/* wind screenshot */
.wind-shot { position: absolute; left: 15px; top: 363px; width: 592px; height: 320px; background: #13161a; color: #c8cbcb; overflow: hidden; font-family: "Liberation Sans", "Noto Sans CJK SC", sans-serif; font-size: 9px; filter: blur(.2px); }
.ws-title { height: 10px; background: #464849; display: flex; align-items: center; gap: 4px; padding-left: 1px; font-size: 6px; line-height: 10px; color: #bbb; }
.ws-logo { display: block; width: 8px; height: 8px; background: #e13a3a; }
.ws-controls { margin-left: auto; padding-right: 4px; }
.ws-menu { height: 11px; background: #3f4142; display: flex; align-items: center; gap: 4px; padding-left: 22px; font-size: 6px; white-space: nowrap; overflow: hidden; text-decoration: underline; color: #ccc; }
.ws-hot { margin-left: 26px; }
.ws-tabs { height: 10px; background: #525455; display: flex; align-items: center; font-size: 6px; gap: 8px; padding-left: 8px; }
.ws-tab2 { background: #3a3c3d; padding: 0 20px 0 4px; line-height: 10px; }
.ws-tools { height: 8px; background: #25282a; display: flex; align-items: center; gap: 8px; font-size: 6px; padding-left: 6px; color: #aaa; }
.ws-tool-on { background: #555; padding: 0 6px; }
.ws-right { margin-left: auto; padding-right: 30px; }
.ws-grid { display: grid; grid-template-columns: 20px 50px 66px 40px 42px 42px 54px 36px 46px 34px 52px 64px 32px; height: 14px; line-height: 14px; padding-left: 14px; text-align: center; white-space: nowrap; }
.ws-grid .l { text-align: left; padding-left: 1px; }
.ws-head { height: 15px; background: #202426; color: #85888a; margin-bottom: -1px; line-height: 15px; }
.ws-grid.on { background: #3a3c3e; }
.ws-scroll { height: 3px; padding-left: 14px; }
.ws-scroll i { display: block; width: 264px; height: 3px; background: #5a5c5d; }
.ws-sheet { height: 11px; display: flex; gap: 4px; padding-left: 14px; font-size: 6px; line-height: 11px; color: #9a9d9d; white-space: nowrap; }
.ws-sheet .on { background: #4a4c4e; padding: 0 3px; color: #eee; }
.ws-chart { display: block; width: 592px; height: 104px; margin-top: 3px; }
.ws-t { font: 5.500px "Liberation Sans", "Noto Sans CJK SC", sans-serif; }
.ws-t5 { font: 4.600px "Liberation Sans", "Noto Sans CJK SC", sans-serif; }
.ws-info { display: flex; gap: 26px; height: 9px; background: #1a1e20; font-size: 5.500px; line-height: 9px; padding-left: 2px; white-space: nowrap; margin-top: 2px; }
.ws-green { color: #4bb27a; }
.ws-foot { display: flex; gap: 8px; height: 9px; background: #222527; font-size: 5.500px; line-height: 9px; padding-left: 3px; white-space: nowrap; color: #aaa; }
.ws-last { margin-left: 120px; }
.ws-foot i { display: block; margin-left: auto; width: 6px; height: 9px; background: #d33; }
.ws-float { position: absolute; left: 541px; top: 151px; width: 42px; height: 19px; border-radius: 10px; background: #fff; color: #444; display: flex; justify-content: flex-end; align-items: center; font-size: 8.500px; }
.ws-pct { width: 19px; height: 19px; border-radius: 50%; border: 1px solid #ccc; text-align: center; line-height: 17px; }

.cursor { position: absolute; left: 379px; top: 220px; width: 14px; height: 20px; }

/* scrollbar */
.vscroll { width: 20px; flex: none; position: relative; display: flex; flex-direction: column; padding-top: 3px; }
.sb-btn { height: 19px; background: #fff; border: 1px solid #c6c7c7; display: flex; align-items: center; justify-content: center; flex: none; }
.sb-up { width: 0; height: 0; border: 5px solid transparent; border-bottom: 5px solid #777; border-top: 0; }
.sb-dn { width: 0; height: 0; border: 5px solid transparent; border-top: 5px solid #777; border-bottom: 0; }
.sb-thumb { height: 231px; background: #fff; border: 1px solid #c6c7c7; border-top: 0; flex: none; }
.sb-track { flex: none; height: 464px; background: #d8d9da; }
.sb-page { height: 19px; margin-top: 4px; display: flex; flex-direction: column; align-items: center; justify-content: center; flex: none; }
.sb-page2 { margin-top: 0; }
.sb-up2 { width: 0; height: 0; border: 5px solid transparent; border-bottom: 5px solid #777; border-top: 0; margin-bottom: 1px; }
.sb-dn2 { width: 0; height: 0; border: 5px solid transparent; border-top: 5px solid #777; border-bottom: 0; margin-bottom: 1px; }
.float-widget { position: absolute; left: 7px; top: 60px; width: 13px; height: 73px; background: #4e5156; border-radius: 4px 0 0 4px; padding: 34px 2px 4px 5px; }
.float-widget i { display: block; height: 31px; background: repeating-linear-gradient(#d6cf78 0 1px, #4e5156 1px 2px); }

/* status bar */
.statusbar { height: 28px; flex: none; background: #f3f4f4; border-top: 1px solid #c9caca; display: flex; align-items: center; font-size: 14.500px; color: #444; }
.lang { margin-left: 7px; }
.st-right { margin-left: auto; display: flex; align-items: center; height: 100%; padding-right: 7px; }
.notes { display: flex; align-items: center; gap: 4px; color: #333; margin-right: 30px; }
.st-i { width: 14px; height: 14px; }
.view { width: 30px; height: 27px; margin-right: 12px; display: flex; align-items: center; justify-content: center; }
.view.on { background: #d2d3d3; }
.st-v { width: 17px; height: 17px; }
.zoom-minus { font: 700 15px "Liberation Sans", sans-serif; color: #666; width: 12px; margin-left: -2px; }
.zoom-track { position: relative; width: 125px; height: 1px; background: #a5a5a5; margin: 0 3px; }
.zoom-thumb { position: absolute; left: 50px; top: -6px; width: 5px; height: 13px; background: #777; }
.zoom-plus { font: 700 16px "Liberation Sans", sans-serif; color: #555; width: 12px; }
.zoom-val { margin-left: 11px; font: 14.500px "Liberation Sans", sans-serif; color: #333; }
.st-fit { width: 16px; height: 16px; margin-left: 16px; }

/* taskbar */
.taskbar { height: 50px; flex: none; display: flex; background: linear-gradient(90deg, #cddde6, #cfdfe6 60%, #c8dae1); }
.search { width: 272px; height: 49px; background: #fff; display: flex; align-items: center; overflow: hidden; flex: none; }
.search-text { font-size: 19.500px; margin-left: -14px; color: #2f2f2f; white-space: nowrap; }
.emoji { width: 90px; height: 30px; margin-left: 57px; flex: none; }
.apps { display: flex; }
.app { width: 62px; height: 50px; display: flex; align-items: center; justify-content: center; position: relative; padding-bottom: 4px; }
.app.run::after { content: ""; position: absolute; left: 6px; bottom: 0; width: 51px; height: 3px; background: linear-gradient(90deg, #1b71b8 82%, #8fb6d6 82%); }
.ti { width: 24px; height: 24px; }
.ta { width: 30px; height: 30px; }
.svg-pc { font: 700 10px "Liberation Sans", sans-serif; fill: #fff; }
.svg-p { font: 700 18px "Liberation Sans", sans-serif; fill: #fff; }
.tray { flex: 1; display: flex; align-items: center; padding-left: 240px; color: #222; }
.t-cloud { width: 32px; height: 30px; flex: none; }
.t-temp { font: 19px "Liberation Sans", sans-serif; margin-left: 8px; color: #222; }
.t-wx { font-size: 18px; margin-left: 8px; }
.t-up { width: 16px; height: 10px; margin-left: 23px; flex: none; }
.t-mic { width: 14px; height: 24px; margin-left: 14px; flex: none; }
.t-shield { width: 20px; height: 24px; margin-left: 15px; flex: none; }
.t-vol { width: 18px; height: 18px; margin-left: 5px; flex: none; }
.t-ime { font-size: 19px; margin-left: 15px; }
.t-clock { display: flex; flex-direction: column; align-items: center; font: 16.500px/23px "Liberation Sans", sans-serif; margin-left: 9px; width: 88px; color: #222; white-space: nowrap; flex: none; }
.t-note { width: 20px; height: 24px; margin-left: 17px; flex: none; }
```
